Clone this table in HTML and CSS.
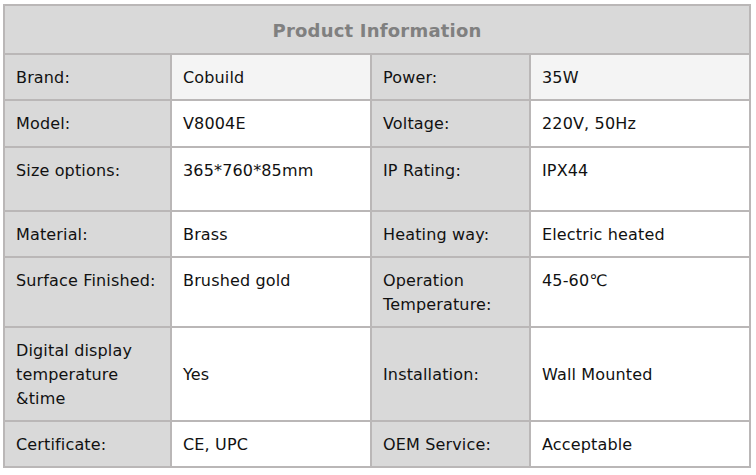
FILE: index.html
```html
<!DOCTYPE html>
<html>
<head>
<meta charset="utf-8">
<link rel="stylesheet" href="styles.css">
</head>
<body>
<table class="spec">
  <colgroup>
    <col class="c1"><col class="c2"><col class="c3"><col class="c4">
  </colgroup>
  <tr><th colspan="4" class="title">Product Information</th></tr>
  <tr class="first">
    <td class="lbl">Brand:</td><td class="val">Cobuild</td>
    <td class="lbl">Power:</td><td class="val">35W</td>
  </tr>
  <tr class="model">
    <td class="lbl">Model:</td><td class="val">V8004E</td>
    <td class="lbl">Voltage:</td><td class="val">220V, 50Hz</td>
  </tr>
  <tr class="tall top">
    <td class="lbl">Size options:</td><td class="val">365*760*85mm</td>
    <td class="lbl">IP Rating:</td><td class="val">IPX44</td>
  </tr>
  <tr>
    <td class="lbl">Material:</td><td class="val">Brass</td>
    <td class="lbl">Heating way:</td><td class="val">Electric heated</td>
  </tr>
  <tr class="top">
    <td class="lbl">Surface Finished:</td><td class="val">Brushed gold</td>
    <td class="lbl">Operation Temperature:</td><td class="val">45-60℃</td>
  </tr>
  <tr>
    <td class="lbl">Digital display temperature &amp;time</td><td class="val">Yes</td>
    <td class="lbl">Installation:</td><td class="val">Wall Mounted</td>
  </tr>
  <tr>
    <td class="lbl">Certificate:</td><td class="val">CE, UPC</td>
    <td class="lbl">OEM Service:</td><td class="val">Acceptable</td>
  </tr>
</table>
</body>
</html>
```
FILE: styles.css
```css
html, body {
  margin: 0;
  padding: 0;
  background: #ffffff;
}
body {
  font-family: "DejaVu Sans", Verdana, sans-serif;
  font-size: 16px;
  letter-spacing: 0.15px;
  color: #111111;
}
.spec {
  margin: 4px 0 0 3px;
  width: 748px;
  border-collapse: collapse;
  table-layout: fixed;
  border: 2px solid #bab7b7;
}
.c1 { width: 167px; }
.c2 { width: 200px; }
.c3 { width: 159px; }
.c4 { width: 220px; }
.spec th, .spec td {
  border: 2px solid #bab7b7;
  line-height: 24px;
  padding: 11px 9px 9px 11px;
  text-align: left;
  vertical-align: middle;
}
.spec .title {
  background: #d9d9d9;
  color: #808080;
  font-weight: bold;
  font-size: 18px;
  letter-spacing: 0.2px;
  text-align: center;
  padding: 12px 10px 10px 10px;
  line-height: 25px;
}
.lbl {
  background: #d9d9d9;
}
.val {
  background: #ffffff;
}
.first .val {
  background: #f4f4f4;
}
.model td {
  padding-bottom: 10px;
}
.top td {
  vertical-align: top;
}
.tall td {
  padding-bottom: 27px;
}
```
